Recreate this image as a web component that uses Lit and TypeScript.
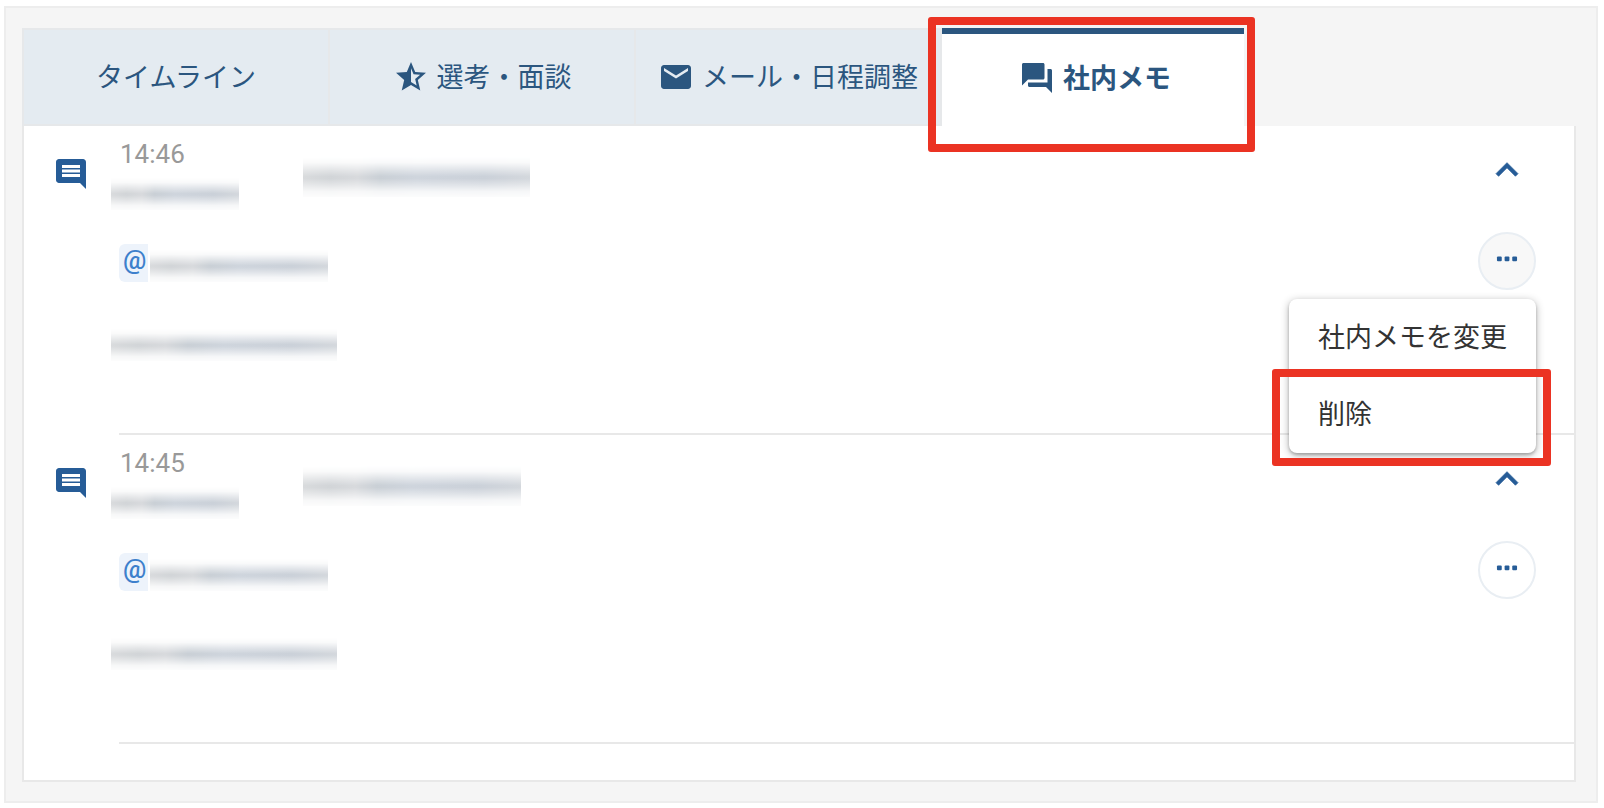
import { LitElement, html, css, svg, nothing } from "lit";
import { customElement, property, state } from "lit/decorators.js";
import { classMap } from "lit/directives/class-map.js";

const icons = {
  star: svg`<path d="M22 9.24l-7.19-.62L12 2 9.19 8.63 2 9.24l5.46 4.73L5.82 21 12 17.27 18.18 21l-1.63-7.03L22 9.24zM12 15.4V6.1l1.71 4.04 4.38.38-3.32 2.88 1 4.28L12 15.4z"/>`,
  mail: svg`<path d="M20 4H4c-1.1 0-1.99.9-1.99 2L2 18c0 1.1.9 2 2 2h16c1.1 0 2-.9 2-2V6c0-1.1-.9-2-2-2zm0 4l-8 5-8-5V6l8 5 8-5v2z"/>`,
  forum: svg`<path d="M21 6h-2v9H6v2c0 .55.45 1 1 1h11l4 4V7c0-.55-.45-1-1-1zm-4 6V3c0-.55-.45-1-1-1H3c-.55 0-1 .45-1 1v14l4-4h10c.55 0 1-.45 1-1z"/>`,
  comment: svg`<path d="M21.99 4c0-1.1-.89-2-1.99-2H4c-1.1 0-2 .9-2 2v12c0 1.1.9 2 2 2h14l4 4-.01-18zM18 14H6v-2h12v2zm0-3H6V9h12v2zm0-3H6V6h12v2z"/>`,
  less: svg`<path d="M12 8l-6 6 1.41 1.41L12 10.83l4.59 4.58L18 14z"/>`,
  more: svg`<rect x="5.3" y="9" width="3.2" height="3.2" rx=".7"/><rect x="10.4" y="9" width="3.2" height="3.2" rx=".7"/><rect x="15.5" y="9" width="3.2" height="3.2" rx=".7"/>`,
};

type IconName = keyof typeof icons;

const icon = (name: IconName) =>
  html`<svg class="icon" viewBox="0 0 24 24" aria-hidden="true">${icons[name]}</svg>`;

interface Tab {
  id: string;
  label: string;
  icon?: IconName;
}

interface Memo {
  time: string;
  titleWidth: number;
}

const TABS: Tab[] = [
  { id: "timeline", label: "タイムライン" },
  { id: "selection", label: "選考・面談", icon: "star" },
  { id: "mail", label: "メール・日程調整", icon: "mail" },
  { id: "memo", label: "社内メモ", icon: "forum" },
];

const MEMOS: Memo[] = [
  { time: "14:46", titleWidth: 227 },
  { time: "14:45", titleWidth: 218 },
];

const shared = css`
  *,
  *::before {
    box-sizing: border-box;
  }
  button {
    margin: 0;
    padding: 0;
    border: 0;
    background: none;
    font: inherit;
    color: inherit;
    cursor: pointer;
  }
  .icon {
    display: block;
    flex: none;
    width: 36px;
    height: 36px;
    fill: currentColor;
  }
  .callout {
    position: relative;
  }
  .callout::before {
    content: "";
    position: absolute;
    border: 8px solid #eb3323;
    border-radius: 3px;
    pointer-events: none;
    z-index: 3;
  }
`;

@customElement("memo-entry")
export class MemoEntry extends LitElement {
  @property({ attribute: false }) memo!: Memo;
  @property({ type: Boolean }) menuOpen = false;
  @state() private expanded = true;

  static styles = [
    shared,
    css`
      :host {
        display: block;
      }
      .entry {
        display: grid;
        grid-template-columns: 87px 1fr auto;
        padding-right: 38px;
      }
      .kind {
        padding: 30px 0 0 29px;
        color: #265c97;
      }
      .content {
        padding: 12px 0 72px;
      }
      .content.collapsed {
        padding-bottom: 11px;
      }
      .meta {
        display: grid;
        grid-template-columns: 192px 1fr;
      }
      .author {
        display: grid;
        gap: 8px;
      }
      .title {
        padding-top: 19px;
      }
      .time {
        padding-left: 9px;
        line-height: 32px;
        font-size: 26px;
        color: #999;
      }
      .mention {
        display: flex;
        align-items: flex-end;
        gap: 2px;
        margin: 34px 0 47px;
        padding-left: 8px;
      }
      .at {
        width: 29px;
        height: 38px;
        padding-left: 4px;
        border-radius: 6px 0 0 6px;
        background: #edf3fb;
        color: #3d80cc;
        font-size: 26px;
        font-weight: 500;
        line-height: 33px;
        text-decoration: none;
      }
      .redacted {
        display: block;
        height: 32px;
        background: linear-gradient(
          90deg,
          #d9dbdd,
          #d2d5d8 12%,
          #d8dadd 24%,
          #cad0d6 34%,
          #cfd5dd 50%,
          #cbd1d9 80%,
          #d4d8dd
        );
        -webkit-mask-image: linear-gradient(#0000, #0002 14%, #000a 34%, #000 48%, #000 54%, #000a 68%, #0003 86%, #0001);
        mask-image: linear-gradient(#0000, #0002 14%, #000a 34%, #000 48%, #000 54%, #000a 68%, #0003 86%, #0001);
      }
      .tall {
        height: 40px;
      }
      .actions {
        display: flex;
        flex-direction: column;
        align-items: center;
        gap: 40px;
        padding-top: 22px;
        color: #265c97;
      }
      .toggle .icon {
        width: 44px;
        height: 44px;
        stroke: currentColor;
        stroke-width: 0.4px;
      }
      .toggle.closed .icon {
        transform: rotate(180deg);
      }
      .more {
        position: relative;
      }
      .round {
        display: grid;
        place-items: center;
        width: 58px;
        height: 58px;
        border: 2px solid #e9eef3;
        border-radius: 50%;
      }
      .round.pressed {
        background: #f8f8f8;
      }
      .menu {
        position: absolute;
        top: calc(100% + 9px);
        right: 0;
        z-index: 2;
        border-radius: 8px;
        background: #fff;
        box-shadow: 0 2px 8px #0000004d, 0 2px 3px #00000033;
      }
      .item {
        display: block;
        width: 100%;
        height: 77px;
        padding: 0 29px;
        color: #333;
        text-align: left;
        white-space: nowrap;
      }
      .item.callout::before {
        inset: -7px -15px -13px -17px;
      }
      .rule {
        height: 2px;
        margin: 0 0 0 95px;
        border: 0;
        background: #e8e8e8;
      }
    `,
  ];

  private bar(width: number, tall = false) {
    return html`<span class=${classMap({ redacted: true, tall })} style="width:${width}px"></span>`;
  }

  render() {
    const { time, titleWidth } = this.memo;
    return html`
      <article class="entry">
        <div class="kind">${icon("comment")}</div>
        <div class=${classMap({ content: true, collapsed: !this.expanded })}>
          <header class="meta">
            <div class="author">
              <time class="time">${time}</time>
              ${this.bar(128)}
            </div>
            <div class="title">${this.bar(titleWidth, true)}</div>
          </header>
          ${this.expanded
            ? html`<div class="mention"><a class="at" href="#">@</a>${this.bar(178)}</div>
                ${this.bar(226)}`
            : nothing}
        </div>
        <div class="actions">
          <button
            class=${classMap({ toggle: true, closed: !this.expanded })}
            aria-label="開閉"
            aria-expanded=${this.expanded}
            @click=${() => (this.expanded = !this.expanded)}
          >
            ${icon("less")}
          </button>
          ${this.expanded
            ? html`<div class="more">
                <button
                  class=${classMap({ round: true, pressed: this.menuOpen })}
                  aria-label="メニュー"
                  aria-haspopup="menu"
                  aria-expanded=${this.menuOpen}
                  @click=${() => (this.menuOpen = !this.menuOpen)}
                >
                  ${icon("more")}
                </button>
                ${this.menuOpen
                  ? html`<div class="menu" role="menu">
                      <button class="item" role="menuitem">社内メモを変更</button>
                      <button class="item callout" role="menuitem">削除</button>
                    </div>`
                  : nothing}
              </div>`
            : nothing}
        </div>
      </article>
      <hr class="rule" />
    `;
  }
}

@customElement("app-root")
export class AppRoot extends LitElement {
  @state() private active = "memo";

  static styles = [
    shared,
    css`
      :host {
        display: block;
        padding: 6px 6px 5px 4px;
        background: #fff;
        font-family: Roboto, "Noto Sans CJK JP", sans-serif;
        font-size: 27px;
        line-height: 36px;
      }
      .panel {
        padding: 20px 20px 19px 16px;
        border: 2px solid #ededed;
        background: #f5f5f5;
      }
      .tabs {
        display: flex;
        border-left: 2px solid #e6e8ea;
      }
      .tab {
        display: flex;
        flex: 0 1 306px;
        align-items: center;
        justify-content: center;
        gap: 8px;
        height: 98px;
        border: solid #e6e8ea;
        border-width: 2px 2px 2px 0;
        background: #e4ebf1;
        color: #2b567f;
        white-space: nowrap;
      }
      .label {
        padding-top: 2px;
      }
      .tab.active {
        flex-basis: 302px;
        padding: 0 0 4px 4px;
        border: 0;
        border-top: 6px solid #2b567f;
        background: #fff;
        font-weight: 700;
      }
      .tab.callout::before {
        inset: -17px -11px -26px -14px;
      }
      .card {
        padding-bottom: 36px;
        border: 2px solid #e8e8e8;
        border-top: 0;
        background: #fff;
      }
    `,
  ];

  render() {
    return html`
      <main class="panel">
        <div class="tabs" role="tablist">
          ${TABS.map((tab) => {
            const active = tab.id === this.active;
            return html`<button
              class=${classMap({ tab: true, active, callout: tab.id === "memo" })}
              role="tab"
              aria-selected=${active}
              @click=${() => (this.active = tab.id)}
            >
              ${tab.icon ? icon(tab.icon) : nothing}<span class="label">${tab.label}</span>
            </button>`;
          })}
        </div>
        <section class="card" role="tabpanel">
          ${MEMOS.map((memo, i) => html`<memo-entry .memo=${memo} .menuOpen=${i === 0}></memo-entry>`)}
        </section>
      </main>
    `;
  }
}
